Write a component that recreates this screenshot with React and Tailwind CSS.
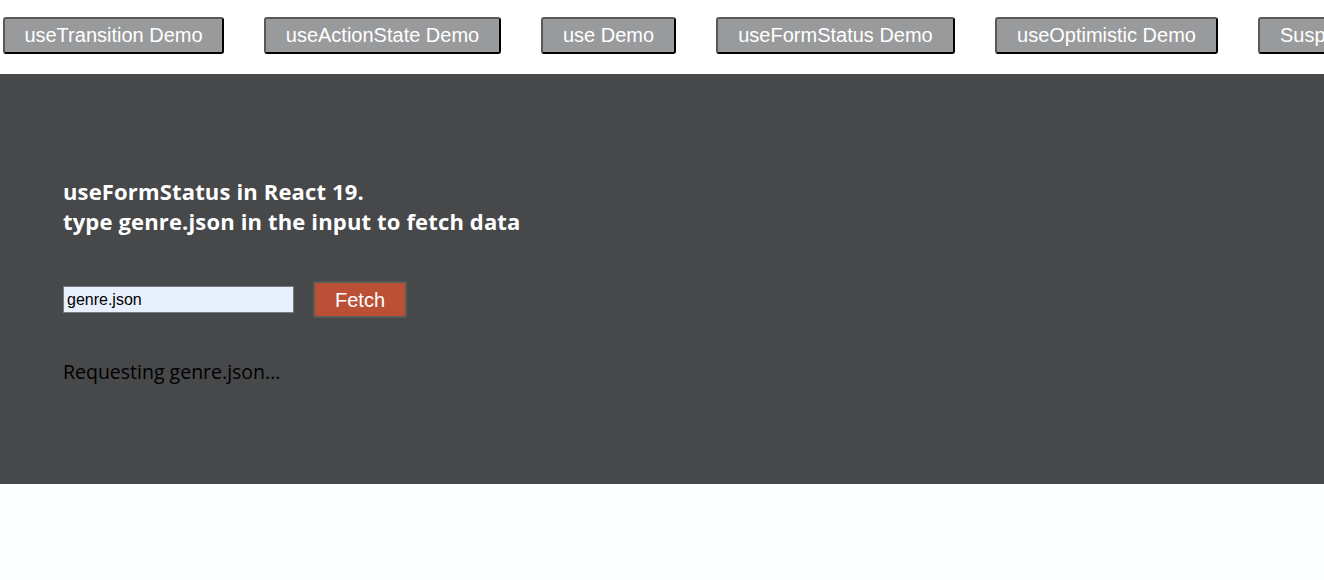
import { useState } from 'react';

const demos = [
  { label: 'useTransition Demo', w: 'w-[221px]' },
  { label: 'useActionState Demo', w: 'w-[237px]' },
  { label: 'use Demo', w: 'w-[135px]' },
  { label: 'useFormStatus Demo', w: 'w-[239px]' },
  { label: 'useOptimistic Demo', w: 'w-[223px]' },
  { label: 'Suspense Demo', w: 'px-[20px]' },
];

export default function App() {
  const [query, setQuery] = useState('genre.json');

  return (
    <div className="min-h-[580px] bg-[#fdfeff] overflow-hidden">
      {/* demo switcher */}
      <nav className="flex flex-nowrap gap-10 pl-[3px] pt-[17px] pb-[20px] bg-white whitespace-nowrap">
        {demos.map((d) => (
          <button
            key={d.label}
            className={`${d.w} shrink-0 h-[37px] pb-[1px] bg-[#999a9c] text-white text-[20px] font-['Liberation_Sans',Arial,sans-serif] border-2 border-t-[#58595b] border-l-[#58595b] border-r-black border-b-black rounded-[3px]`}
          >
            {d.label}
          </button>
        ))}
      </nav>

      <section className="bg-[#47484a] h-[410px] pl-[63px] pt-[102px]">
        <h2 className="text-white font-bold text-[22px] leading-[30px] tracking-[0.15px] font-['Open_Sans','Noto_Sans',sans-serif]">
          useFormStatus in React 19.
          <br />
          type genre.json in the input to fetch data
        </h2>

        <form
          className="flex items-center gap-[19px] mt-[45px]"
          onSubmit={(e) => e.preventDefault()}
        >
          <input
            type="text"
            value={query}
            onChange={(e) => setQuery(e.target.value)}
            className="w-[231px] h-[27px] px-[3px] bg-[#e8f0fe] border border-[#7a7b7d] text-black text-[16px] font-['Liberation_Sans',Arial,sans-serif] outline-none"
          />
          <button
            type="submit"
            className="w-[94px] h-[37px] bg-[#bc5037] text-white text-[20px] font-['Liberation_Sans',Arial,sans-serif] border-2 border-[#595a5c] rounded-[2px]"
          >
            Fetch
          </button>
        </form>

        <p className="mt-[42px] text-black text-[19.5px] leading-[24px] font-['Open_Sans','Noto_Sans',sans-serif]">
          Requesting genre.json...
        </p>
      </section>
    </div>
  );
}
